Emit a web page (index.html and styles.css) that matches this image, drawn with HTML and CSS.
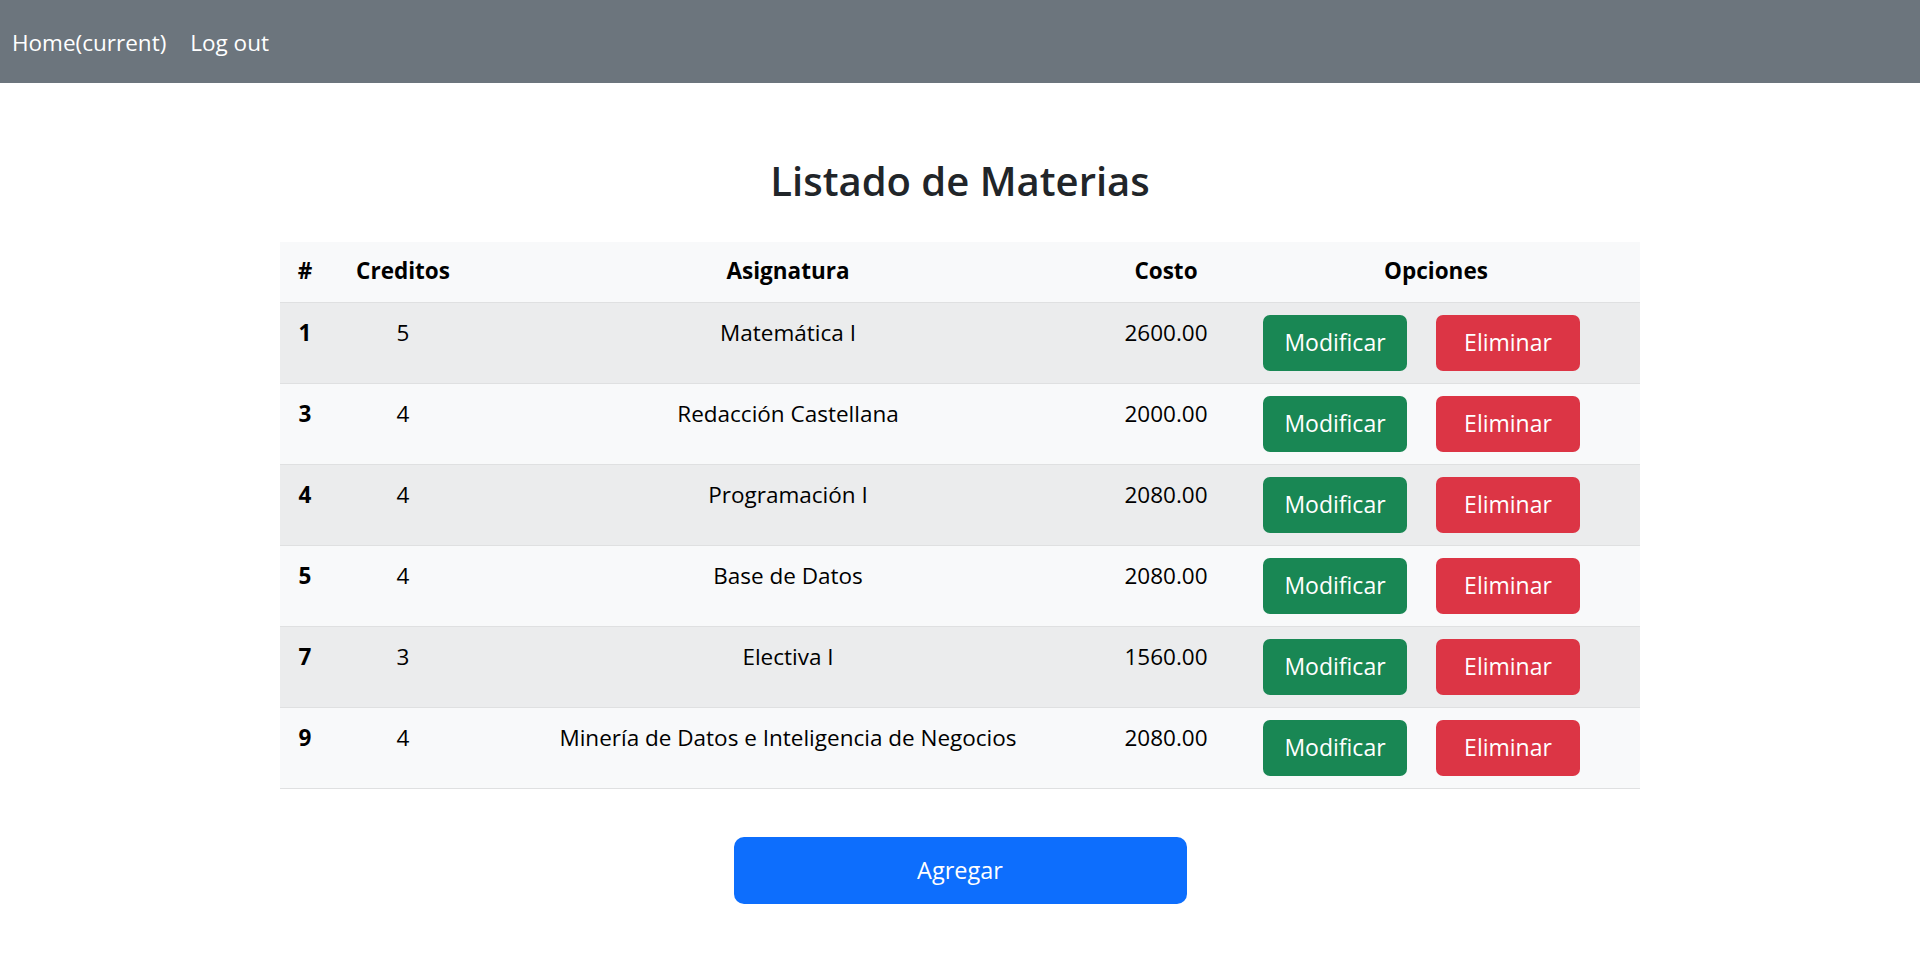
FILE: index.html
```html
<!DOCTYPE html>
<html lang="es">
<head>
<meta charset="utf-8">
<title>Listado de Materias</title>
<link rel="stylesheet" href="styles.css">
</head>
<body>
<nav class="navbar">
  <a class="nav-link" href="#">Home(current)</a>
  <a class="nav-link" href="#">Log out</a>
</nav>
<main class="container">
  <h2 class="title">Listado de Materias</h2>
  <table class="table">
    <colgroup>
      <col class="c-id"><col class="c-cred"><col class="c-asig"><col class="c-cost"><col class="c-opt">
    </colgroup>
    <thead>
      <tr><th>#</th><th>Creditos</th><th>Asignatura</th><th>Costo</th><th>Opciones</th></tr>
    </thead>
    <tbody>
      <tr class="odd"><th>1</th><td>5</td><td>Matemática I</td><td>2600.00</td><td class="opts"><a class="btn btn-green" href="#">Modificar</a><a class="btn btn-red" href="#">Eliminar</a></td></tr>
      <tr><th>3</th><td>4</td><td>Redacción Castellana</td><td>2000.00</td><td class="opts"><a class="btn btn-green" href="#">Modificar</a><a class="btn btn-red" href="#">Eliminar</a></td></tr>
      <tr class="odd"><th>4</th><td>4</td><td>Programación I</td><td>2080.00</td><td class="opts"><a class="btn btn-green" href="#">Modificar</a><a class="btn btn-red" href="#">Eliminar</a></td></tr>
      <tr><th>5</th><td>4</td><td>Base de Datos</td><td>2080.00</td><td class="opts"><a class="btn btn-green" href="#">Modificar</a><a class="btn btn-red" href="#">Eliminar</a></td></tr>
      <tr class="odd"><th>7</th><td>3</td><td>Electiva I</td><td>1560.00</td><td class="opts"><a class="btn btn-green" href="#">Modificar</a><a class="btn btn-red" href="#">Eliminar</a></td></tr>
      <tr><th>9</th><td>4</td><td>Minería de Datos e Inteligencia de Negocios</td><td>2080.00</td><td class="opts"><a class="btn btn-green" href="#">Modificar</a><a class="btn btn-red" href="#">Eliminar</a></td></tr>
    </tbody>
  </table>
  <div class="actions">
    <a class="btn-add" href="#">Agregar</a>
  </div>
</main>
</body>
</html>
```
FILE: styles.css
```css
* { box-sizing: border-box; }
html, body { margin: 0; padding: 0; }
body {
  font-family: "Open Sans", "Noto Sans", sans-serif;
  font-size: 22.5px;
  color: #212529;
  background: #fff;
}
a { text-decoration: none; }

.navbar {
  height: 83px;
  background: #6c757d;
  display: flex;
  align-items: center;
  padding: 2px 12px 0;
  gap: 24px;
}
.nav-link {
  color: #fff;
  font-size: 22.5px;
}

.container {
  width: 1360px;
  margin: 0 auto;
}
.title {
  margin: 74px 0 37px;
  text-align: center;
  font-size: 40px;
  font-weight: 600;
  line-height: 1.2;
  color: #212529;
}

.table {
  width: 100%;
  border-collapse: collapse;
  table-layout: fixed;
  color: #000;
  background: #f8f9fa;
}
.c-id { width: 50px; }
.c-cred { width: 146px; }
.c-asig { width: 624px; }
.c-cost { width: 132px; }
.c-opt { width: 408px; }

.table thead th {
  height: 60px;
  font-weight: 700;
  text-align: center;
  vertical-align: middle;
  border-bottom: 1px solid #dfe0e1;
  padding: 0 0 2px;
}
.table tbody th,
.table tbody td {
  height: 81px;
  text-align: center;
  vertical-align: top;
  padding: 14px 0 0;
  line-height: 32px;
  border-bottom: 1px solid #dfe0e1;
}
.table tbody th { font-weight: 700; }
.table tbody tr.odd { background: #ebeced; }

.table tbody td.opts {
  padding: 12px 0 0;
  line-height: 1;
  white-space: nowrap;
}
.btn {
  display: inline-flex;
  align-items: center;
  justify-content: center;
  width: 144px;
  height: 56px;
  margin-right: 29px;
  border-radius: 7px;
  color: #fff;
  font-size: 23px;
}
.btn-green { background: #198754; }
.btn-red { background: #dc3545; }

.actions {
  display: flex;
  justify-content: center;
  padding-top: 48px;
}
.btn-add {
  display: flex;
  align-items: center;
  justify-content: center;
  width: 453px;
  height: 67px;
  border-radius: 10px;
  background: #0d6efd;
  color: #fff;
  font-size: 23.5px;
}
```
